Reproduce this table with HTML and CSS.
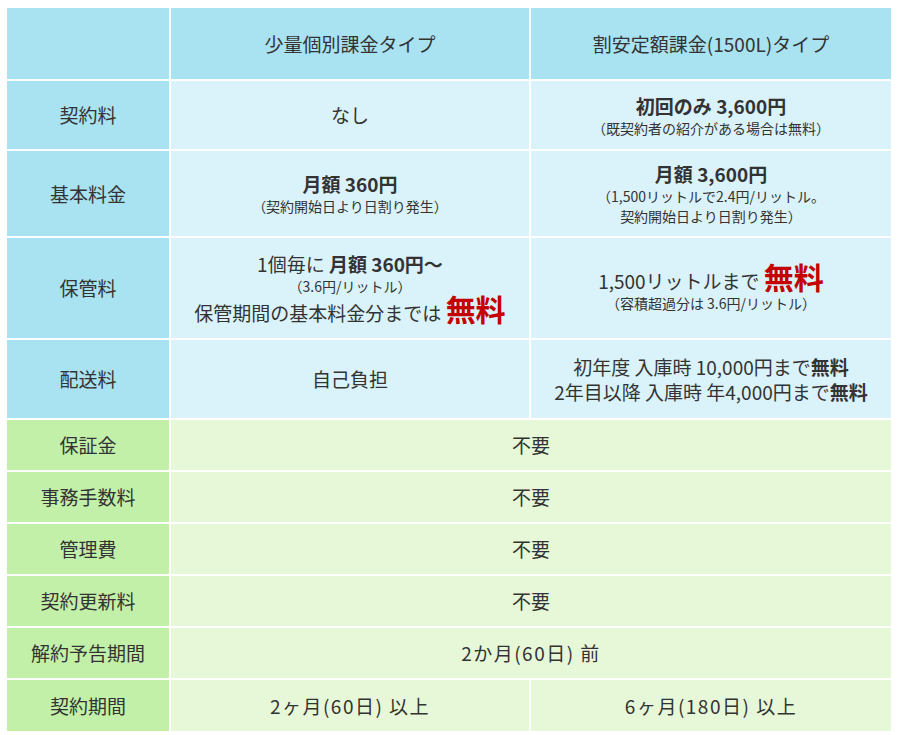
FILE: index.html
```html
<!DOCTYPE html>
<html lang="ja">
<head>
<meta charset="utf-8">
<title>料金表</title>
<link rel="stylesheet" href="styles.css">
</head>
<body>
<table class="price">
  <colgroup>
    <col class="c1"><col class="c2"><col class="c3">
  </colgroup>
  <tr class="r-head">
    <th class="blue-h"></th>
    <th class="blue-h">少量個別課金タイプ</th>
    <th class="blue-h">割安定額課金(1500L)タイプ</th>
  </tr>
  <tr class="r-a">
    <th class="blue-h">契約料</th>
    <td class="blue-d">なし</td>
    <td class="blue-d"><div class="main b">初回のみ 3,600円</div><div class="sm">（既契約者の紹介がある場合は無料）</div></td>
  </tr>
  <tr class="r-b">
    <th class="blue-h">基本料金</th>
    <td class="blue-d"><div class="main b">月額 360円</div><div class="sm">（契約開始日より日割り発生）</div></td>
    <td class="blue-d"><div class="main b">月額 3,600円</div><div class="sm">（1,500リットルで2.4円/リットル。<br>契約開始日より日割り発生）</div></td>
  </tr>
  <tr class="r-c">
    <th class="blue-h">保管料</th>
    <td class="blue-d"><div class="main">1個毎に <span class="b">月額 360円〜</span></div><div class="sm">（3.6円/リットル）</div><div class="main">保管期間の基本料金分までは <span class="free">無料</span></div></td>
    <td class="blue-d"><div class="main">1,500リットルまで <span class="free">無料</span></div><div class="sm">（容積超過分は 3.6円/リットル）</div></td>
  </tr>
  <tr class="r-d">
    <th class="blue-h">配送料</th>
    <td class="blue-d">自己負担</td>
    <td class="blue-d"><div class="main">初年度 入庫時 10,000円まで<span class="b">無料</span></div><div class="main">2年目以降 入庫時 年4,000円まで<span class="b">無料</span></div></td>
  </tr>
  <tr class="r-g">
    <th class="green-h">保証金</th>
    <td class="green-d" colspan="2">不要</td>
  </tr>
  <tr class="r-g">
    <th class="green-h">事務手数料</th>
    <td class="green-d" colspan="2">不要</td>
  </tr>
  <tr class="r-g">
    <th class="green-h">管理費</th>
    <td class="green-d" colspan="2">不要</td>
  </tr>
  <tr class="r-g">
    <th class="green-h">契約更新料</th>
    <td class="green-d" colspan="2">不要</td>
  </tr>
  <tr class="r-g">
    <th class="green-h">解約予告期間</th>
    <td class="green-d spaced" colspan="2">2か月(60日) 前</td>
  </tr>
  <tr class="r-g last">
    <th class="green-h">契約期間</th>
    <td class="green-d spaced">2ヶ月(60日) 以上</td>
    <td class="green-d spaced">6ヶ月(180日) 以上</td>
  </tr>
</table>
</body>
</html>
```
FILE: styles.css
```css
html, body {
  margin: 0;
  padding: 0;
  background: #ffffff;
}
body {
  font-family: "Noto Sans CJK JP", "Noto Sans", sans-serif;
  color: #333333;
}
.price {
  margin: 6px 0 0 5px;
  border-collapse: separate;
  border-spacing: 2px;
  table-layout: fixed;
  width: 888px;
}
.c1 { width: 162px; }
.c2 { width: 358px; }
.c3 { width: 360px; }
th, td {
  padding: 0;
  text-align: center;
  vertical-align: middle;
  font-size: 19px;
  line-height: 24px;
  font-weight: normal;
}
.blue-h { background: #a9e2f0; }
.blue-d { background: #daf2f9; }
.green-h { background: #c2f0a8; }
.green-d { background: #e6f8d8; }
.spaced { letter-spacing: 1.5px; }
.r-head { height: 71px; }
.r-a { height: 68px; }
.r-b { height: 85px; }
.r-c { height: 100px; }
.r-d { height: 78px; }
.r-g { height: 50px; }
.r-g.last { height: 51px; }
.main { line-height: 25px; }
.b { font-weight: 600; }
.sm {
  font-size: 14px;
  line-height: 20px;
}
.free {
  color: #c40000;
  font-weight: bold;
  font-size: 30px;
  line-height: 24px;
}
```
